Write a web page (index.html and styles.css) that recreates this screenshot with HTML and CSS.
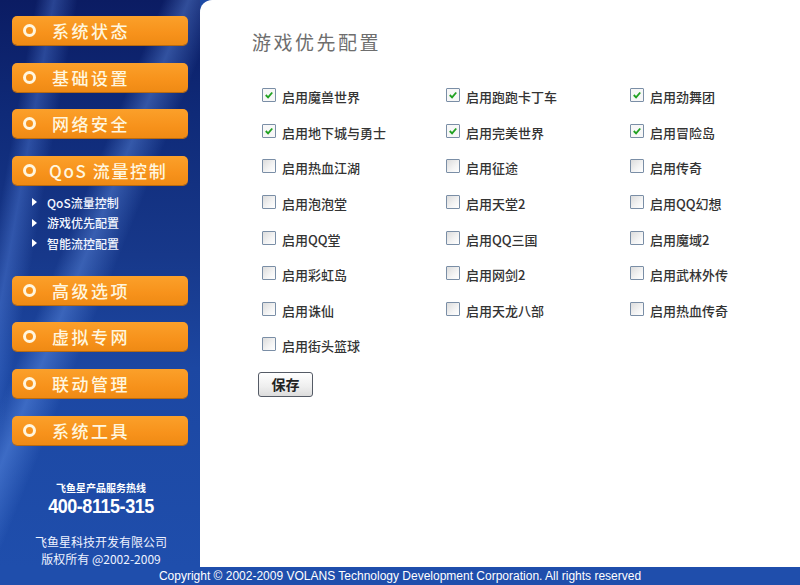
FILE: index.html
```html
<!DOCTYPE html>
<html lang="zh-CN">
<head>
<meta charset="utf-8">
<title>游戏优先配置</title>
<link rel="stylesheet" href="styles.css">
</head>
<body>
<div class="page">
  <div class="top">
    <aside class="sidebar">
      <nav class="menu">
        <a class="btn"><span class="ring"></span><span class="lbl">系统状态</span></a>
        <a class="btn"><span class="ring"></span><span class="lbl">基础设置</span></a>
        <a class="btn"><span class="ring"></span><span class="lbl">网络安全</span></a>
        <a class="btn"><span class="ring"></span><span class="lbl qos">QoS 流量控制</span></a>
        <ul class="sub">
          <li><span class="tri"></span>QoS流量控制</li>
          <li><span class="tri"></span>游戏优先配置</li>
          <li><span class="tri"></span>智能流控配置</li>
        </ul>
        <a class="btn"><span class="ring"></span><span class="lbl">高级选项</span></a>
        <a class="btn"><span class="ring"></span><span class="lbl">虚拟专网</span></a>
        <a class="btn"><span class="ring"></span><span class="lbl">联动管理</span></a>
        <a class="btn"><span class="ring"></span><span class="lbl">系统工具</span></a>
      </nav>
      <div class="hotline">
        <div class="hl-label">飞鱼星产品服务热线</div>
        <div class="hl-num">400-8115-315</div>
      </div>
      <div class="company">
        <div>飞鱼星科技开发有限公司</div>
        <div>版权所有 @2002-2009</div>
      </div>
    </aside>
    <main class="content">
      <h1 class="title">游戏优先配置</h1>
      <div class="grid">
        <label class="item"><span class="box on"><svg viewBox="0 0 13 13"><path d="M3 6.5 L5.5 9 L10 3.8" fill="none" stroke="#21a121" stroke-width="2"/></svg></span>启用魔兽世界</label>
        <label class="item"><span class="box on"><svg viewBox="0 0 13 13"><path d="M3 6.5 L5.5 9 L10 3.8" fill="none" stroke="#21a121" stroke-width="2"/></svg></span>启用跑跑卡丁车</label>
        <label class="item"><span class="box on"><svg viewBox="0 0 13 13"><path d="M3 6.5 L5.5 9 L10 3.8" fill="none" stroke="#21a121" stroke-width="2"/></svg></span>启用劲舞团</label>
        <label class="item"><span class="box on"><svg viewBox="0 0 13 13"><path d="M3 6.5 L5.5 9 L10 3.8" fill="none" stroke="#21a121" stroke-width="2"/></svg></span>启用地下城与勇士</label>
        <label class="item"><span class="box on"><svg viewBox="0 0 13 13"><path d="M3 6.5 L5.5 9 L10 3.8" fill="none" stroke="#21a121" stroke-width="2"/></svg></span>启用完美世界</label>
        <label class="item"><span class="box on"><svg viewBox="0 0 13 13"><path d="M3 6.5 L5.5 9 L10 3.8" fill="none" stroke="#21a121" stroke-width="2"/></svg></span>启用冒险岛</label>
        <label class="item"><span class="box"></span>启用热血江湖</label>
        <label class="item"><span class="box"></span>启用征途</label>
        <label class="item"><span class="box"></span>启用传奇</label>
        <label class="item"><span class="box"></span>启用泡泡堂</label>
        <label class="item"><span class="box"></span>启用天堂2</label>
        <label class="item"><span class="box"></span>启用QQ幻想</label>
        <label class="item"><span class="box"></span>启用QQ堂</label>
        <label class="item"><span class="box"></span>启用QQ三国</label>
        <label class="item"><span class="box"></span>启用魔域2</label>
        <label class="item"><span class="box"></span>启用彩虹岛</label>
        <label class="item"><span class="box"></span>启用网剑2</label>
        <label class="item"><span class="box"></span>启用武林外传</label>
        <label class="item"><span class="box"></span>启用诛仙</label>
        <label class="item"><span class="box"></span>启用天龙八部</label>
        <label class="item"><span class="box"></span>启用热血传奇</label>
        <label class="item"><span class="box"></span>启用街头篮球</label>
      </div>
      <button class="save">保存</button>
    </main>
  </div>
  <footer class="footer">Copyright © 2002-2009 VOLANS Technology Development Corporation. All rights reserved</footer>
</div>
</body>
</html>
```
FILE: styles.css
```css
* { box-sizing: border-box; }
html, body { margin: 0; padding: 0; }
body {
  width: 800px;
  height: 585px;
  overflow: hidden;
  font-family: "Noto Sans CJK SC", "Liberation Sans", sans-serif;
  background: #1e4ba6;
}
.page {
  display: flex;
  flex-direction: column;
  height: 585px;
}
.top {
  display: flex;
  height: 567px;
}
.sidebar {
  width: 200px;
  flex: none;
  display: flex;
  flex-direction: column;
  background:
    linear-gradient(112deg, transparent 0%, transparent 38%, rgba(120,170,255,0.35) 44%, transparent 52%, transparent 100%),
    linear-gradient(100deg, transparent 0%, transparent 12%, rgba(110,160,255,0.30) 18%, transparent 26%, transparent 100%),
    linear-gradient(180deg, #0b1c63 0%, #0f2a78 20%, #17388a 45%, #1c47a2 65%, #1f4eac 100%);
}
.menu {
  padding: 16px 12px 0 12px;
  display: flex;
  flex-direction: column;
}
.btn {
  display: flex;
  align-items: center;
  height: 29px;
  margin-bottom: 17.7px;
  background: linear-gradient(180deg, #fba02a 0%, #f7921b 60%, #ef8a14 100%);
  border-radius: 5px;
  box-shadow: 0 1px 0 #b86a10;
  padding-left: 11px;
}
.ring {
  width: 13px;
  height: 13px;
  border: 3px solid #fff6df;
  border-radius: 50%;
  flex: none;
}
.lbl {
  margin-left: 16px;
  color: #fff6df;
  font-size: 17px;
  font-weight: 500;
  letter-spacing: 2.5px;
  line-height: 29px;
}
.lbl.qos {
  margin-left: 13px;
  letter-spacing: 1.6px;
}
.sub {
  list-style: none;
  margin: -10.7px 0 22px 0;
  padding: 0 0 0 20px;
}
.sub li {
  display: flex;
  align-items: center;
  height: 20.5px;
  color: #f2f5ff;
  font-size: 12px;
  font-weight: 500;
}
.tri {
  width: 0;
  height: 0;
  border-top: 4px solid transparent;
  border-bottom: 4px solid transparent;
  border-left: 5px solid #ffffff;
  margin-right: 10px;
}
.hotline {
  margin-top: 19px;
  text-align: center;
  color: #ffffff;
  padding-left: 2px;
}
.hl-label {
  font-size: 10px;
  font-weight: 700;
  line-height: 14px;
}
.hl-num {
  font-family: "Liberation Sans Narrow", "Liberation Sans", sans-serif;
  font-size: 20px;
  font-weight: 700;
  line-height: 22px;
  letter-spacing: -0.5px;
  transform: scaleX(0.9);
}
.company {
  margin-top: 16px;
  text-align: center;
  color: #eef2ff;
  font-size: 12px;
  line-height: 17px;
  padding-left: 2px;
}
.content {
  flex: 1;
  background: #ffffff;
  border-top-left-radius: 12px;
  padding: 29px 0 0 52px;
}
.title {
  margin: 0;
  font-size: 19px;
  font-weight: 400;
  color: #6e6e6e;
  line-height: 26px;
  letter-spacing: 2.5px;
}
.grid {
  margin-top: 24px;
  margin-left: 10px;
  display: grid;
  grid-template-columns: 184px 184px 184px;
  grid-auto-rows: 35.6px;
}
.item {
  display: flex;
  align-items: center;
  font-size: 13px;
  color: #333333;
  font-weight: 500;
}
.box {
  width: 14px;
  height: 14px;
  border: 1px solid #7a8ea6;
  border-radius: 1px;
  background: linear-gradient(135deg, #dcdcdc 0%, #f4f4f4 60%, #ffffff 100%);
  margin-right: 6px;
  margin-top: -3px;
  flex: none;
  display: flex;
  align-items: center;
  justify-content: center;
}
.box.on {
  background: #f7f7f7;
}
.box svg {
  width: 12px;
  height: 12px;
}
.save {
  margin: 8px 0 0 6px;
  width: 55px;
  height: 25px;
  border: 1px solid #555b66;
  border-radius: 3px;
  background: linear-gradient(180deg, #ffffff 0%, #eeeeee 60%, #dcdcdc 100%);
  font-family: "Noto Sans CJK SC", sans-serif;
  font-size: 14px;
  font-weight: 700;
  color: #222222;
  padding: 0;
}
.footer {
  height: 18px;
  background: #1f4eac;
  color: #ffffff;
  font-family: "Liberation Sans", sans-serif;
  font-size: 12px;
  line-height: 18px;
  text-align: center;
}
```
